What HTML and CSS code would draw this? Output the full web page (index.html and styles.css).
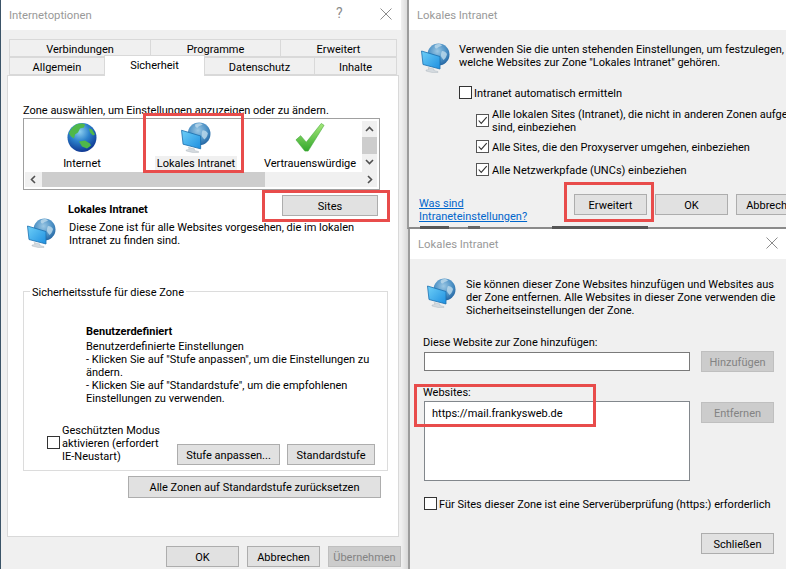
FILE: index.html
```html
<!DOCTYPE html>
<html lang="de">
<head>
<meta charset="utf-8">
<title>Internetoptionen</title>
<link rel="stylesheet" href="styles.css">
</head>
<body>
<svg class="defs" width="0" height="0" aria-hidden="true">
  <defs>
    <radialGradient id="gGlobe" cx="0.42" cy="0.3" r="0.75">
      <stop offset="0" stop-color="#8fd0f0"/>
      <stop offset="0.45" stop-color="#2c82cc"/>
      <stop offset="1" stop-color="#0c2f8c"/>
    </radialGradient>
    <radialGradient id="gBall" cx="0.45" cy="0.35" r="0.7">
      <stop offset="0" stop-color="#9cc8e4"/>
      <stop offset="0.6" stop-color="#4a8fc4"/>
      <stop offset="1" stop-color="#1f5f9c"/>
    </radialGradient>
    <linearGradient id="gScreen" x1="0" y1="0" x2="1" y2="1">
      <stop offset="0" stop-color="#6fd0f8"/>
      <stop offset="1" stop-color="#1e8fe0"/>
    </linearGradient>
    <linearGradient id="gCheck" x1="0" y1="0" x2="0" y2="1">
      <stop offset="0" stop-color="#a6e87a"/>
      <stop offset="1" stop-color="#33a82c"/>
    </linearGradient>
    <symbol id="i-intranet" viewBox="0 0 29 30">
      <circle cx="17.5" cy="11.5" r="11" fill="url(#gBall)"/>
      <path d="M14 2c3-1.500 6-1 7 .5-1.500 1.500-4 1-5 3-2 .5-3-2-2-3.500zM21 8c2 0 4 1 5 3-.5 3-2 5-3.500 6-1-2-3-3-2.500-5 0-2 .5-3 1-4z" fill="#b9d7ea" opacity=".85"/>
      <path d="M.5 8 19 13.500v12.500L2 21.500z" fill="url(#gScreen)" stroke="#1b6fae" stroke-width=".8"/>
      <path d="M7 24.500 13 26v1.500l4 1v1h-6l-6-1.500v-1l3-.500z" fill="#d4dadf" stroke="#a8b2ba" stroke-width=".4"/>
    </symbol>
    <symbol id="i-check" viewBox="0 0 32 32">
      <path d="M1 18.500 6 14 12 21 28 1l3 2-17 27.500h-3.500z" fill="url(#gCheck)" stroke="#3fa536" stroke-width=".6"/>
    </symbol>
    <symbol id="i-x" viewBox="0 0 12 12">
      <path d="M.5.500l11 11M11.500.500l-11 11" fill="none" stroke="#8c8c8c" stroke-width="1"/>
    </symbol>
    <symbol id="i-tick" viewBox="0 0 13 13">
      <path d="M2 6.500 5 10l6.500-7.500" fill="none" stroke="#333" stroke-width="1.300"/>
    </symbol>
    <symbol id="i-up" viewBox="0 0 9 6"><path d="M1 5l3.500-3.500L8 5" fill="none" stroke="#505050" stroke-width="1.600"/></symbol>
    <symbol id="i-down" viewBox="0 0 9 6"><path d="M1 1l3.500 3.500L8 1" fill="none" stroke="#505050" stroke-width="1.600"/></symbol>
    <symbol id="i-left" viewBox="0 0 6 9"><path d="M5 1 1.500 4.500 5 8" fill="none" stroke="#505050" stroke-width="1.600"/></symbol>
    <symbol id="i-right" viewBox="0 0 6 9"><path d="M1 1l3.500 3.500L1 8" fill="none" stroke="#505050" stroke-width="1.600"/></symbol>
  </defs>
</svg>

<main class="desktop">
  <section class="window win-options">
    <header class="titlebar">
      <span class="title">Internetoptionen</span>
      <span class="help">?</span>
      <svg class="close"><use href="#i-x"/></svg>
    </header>
    <div class="tabs">
      <div class="tab-row">
        <span class="tab t-verb">Verbindungen</span>
        <span class="tab t-prog">Programme</span>
        <span class="tab t-erw">Erweitert</span>
      </div>
      <div class="tab-row">
        <span class="tab t-allg">Allgemein</span>
        <span class="tab t-sich">Sicherheit</span>
        <span class="tab t-dat">Datenschutz</span>
        <span class="tab t-inh">Inhalte</span>
      </div>
    </div>
    <div class="panel">
      <p class="zone-prompt">Zone auswählen, um Einstellungen anzuzeigen oder zu ändern.</p>
      <div class="zone-list">
        <div class="zones">
          <div class="zone">
            <svg class="zone-icon" viewBox="0 0 30 30">
              <circle cx="15" cy="15" r="14.500" fill="url(#gGlobe)"/>
              <path d="M9 2c3-1 7-1.500 9 0l-1 3-4 1-2 4-3 2-1 4-3-2-2-3c1-4 4-7 7-9zM12 19l6-1 5 3 1 2-4 3-5-2zM22 6l3 1 3 5-2 1-3-3z" fill="#4fb84a"/>
            </svg>
            <span class="zone-name">Internet</span>
          </div>
          <div class="zone">
            <svg class="zone-icon"><use href="#i-intranet"/></svg>
            <span class="zone-name selected">Lokales Intranet</span>
          </div>
          <div class="zone">
            <svg class="zone-icon"><use href="#i-check"/></svg>
            <span class="zone-name">Vertrauenswürdige</span>
          </div>
        </div>
        <div class="vscroll">
          <svg class="arrow-v"><use href="#i-up"/></svg>
          <span class="vthumb"></span>
          <svg class="arrow-v"><use href="#i-down"/></svg>
        </div>
        <div class="hscroll">
          <svg class="arrow-h"><use href="#i-left"/></svg>
          <span class="hthumb"></span>
          <svg class="arrow-h arrow-end"><use href="#i-right"/></svg>
        </div>
      </div>
      <div class="zone-head">
        <strong class="zone-title">Lokales Intranet</strong>
        <button class="btn btn-sites">Sites</button>
      </div>
      <div class="zone-desc">
        <svg class="icon-large"><use href="#i-intranet"/></svg>
        <p class="zone-text">Diese Zone ist für alle Websites vorgesehen, die im lokalen<br>Intranet zu finden sind.</p>
      </div>
      <fieldset class="group">
        <legend class="group-legend">Sicherheitsstufe für diese Zone</legend>
        <strong class="level-title">Benutzerdefiniert</strong>
        <p class="level-text">Benutzerdefinierte Einstellungen<br>- Klicken Sie auf "Stufe anpassen", um die Einstellungen zu<br>ändern.<br>- Klicken Sie auf "Standardstufe", um die empfohlenen<br>Einstellungen zu verwenden.</p>
        <div class="level-actions">
          <span class="checkbox"></span>
          <span class="protected">Geschützten Modus<br>aktivieren (erfordert<br>IE-Neustart)</span>
          <button class="btn btn-custom">Stufe anpassen...</button>
          <button class="btn btn-default">Standardstufe</button>
        </div>
      </fieldset>
      <button class="btn btn-reset">Alle Zonen auf Standardstufe zurücksetzen</button>
    </div>
    <footer class="footer">
      <button class="btn btn-std">OK</button>
      <button class="btn btn-std">Abbrechen</button>
      <button class="btn btn-std btn-off">Übernehmen</button>
    </footer>
  </section>

  <section class="window win-intranet">
    <header class="titlebar">
      <span class="title">Lokales Intranet</span>
    </header>
    <div class="intranet-body">
      <div class="intro">
        <svg class="icon-large"><use href="#i-intranet"/></svg>
        <p class="intro-text">Verwenden Sie die unten stehenden Einstellungen, um festzulegen,<br>welche Websites zur Zone "Lokales Intranet" gehören.</p>
      </div>
      <div class="opt opt-auto"><span class="checkbox"></span><span class="opt-label">Intranet automatisch ermitteln</span></div>
      <div class="opt opt-sub opt-two"><span class="checkbox"><svg class="tick"><use href="#i-tick"/></svg></span><span class="opt-label">Alle lokalen Sites (Intranet), die nicht in anderen Zonen aufgeführt<br>sind, einbeziehen</span></div>
      <div class="opt opt-sub opt-proxy"><span class="checkbox"><svg class="tick"><use href="#i-tick"/></svg></span><span class="opt-label">Alle Sites, die den Proxyserver umgehen, einbeziehen</span></div>
      <div class="opt opt-sub opt-unc"><span class="checkbox"><svg class="tick"><use href="#i-tick"/></svg></span><span class="opt-label">Alle Netzwerkpfade (UNCs) einbeziehen</span></div>
      <div class="intranet-actions">
        <a class="link" href="#">Was sind<br>Intraneteinstellungen?</a>
        <button class="btn btn-std">Erweitert</button>
        <button class="btn btn-std">OK</button>
        <button class="btn btn-std">Abbrechen</button>
      </div>
    </div>
  </section>

  <div class="remnant"></div>

  <section class="window win-sites">
    <header class="titlebar">
      <span class="title">Lokales Intranet</span>
      <svg class="close"><use href="#i-x"/></svg>
    </header>
    <div class="sites-body">
      <div class="intro">
        <svg class="icon-large"><use href="#i-intranet"/></svg>
        <p class="sites-text">Sie können dieser Zone Websites hinzufügen und Websites aus<br>der Zone entfernen. Alle Websites in dieser Zone verwenden die<br>Sicherheitseinstellungen der Zone.</p>
      </div>
      <label class="field-label add-label">Diese Website zur Zone hinzufügen:</label>
      <div class="field-row">
        <span class="input"></span>
        <button class="btn btn-std btn-off">Hinzufügen</button>
      </div>
      <label class="field-label sites-label">Websites:</label>
      <div class="field-row list-row">
        <div class="listbox">https://mail.frankysweb.de</div>
        <button class="btn btn-std btn-off">Entfernen</button>
      </div>
      <div class="opt opt-https"><span class="checkbox"></span><span class="opt-label">Für Sites dieser Zone ist eine Serverüberprüfung (https:) erforderlich</span></div>
      <div class="sites-footer"><button class="btn btn-std">Schließen</button></div>
    </div>
  </section>

  <span class="mark mark-intranet"></span>
  <span class="mark mark-sites"></span>
  <span class="mark mark-advanced"></span>
  <span class="mark mark-websites"></span>
</main>
</body>
</html>
```

FILE: styles.css
```css
* { box-sizing: border-box; }
html, body { margin: 0; padding: 0; }
body {
  background: #fff;
  font-family: Roboto, "Noto Sans", sans-serif;
  font-size: 11px;
  line-height: 13px;
  color: #000;
}
p { margin: 0; }
strong { display: block; }
.defs { position: absolute; }
.desktop { position: relative; width: 786px; height: 569px; overflow: hidden; background: #f0f0f0; }

/* windows on the desktop */
.window { position: absolute; background: #f0f0f0; overflow: hidden; }
.win-options { left: 0; top: 0; width: 401px; height: 569px; border-left: 1px solid #3b5468; }
.desktop::before {
  content: "";
  position: absolute;
  left: 400px; top: 0;
  width: 8px; height: 569px;
  background: linear-gradient(90deg, #f4f4f4, #d8d8d8);
}
.win-intranet { left: 407px; top: 0; width: 379px; height: 229px; border-left: 2px solid #9c9c9c; border-bottom: 2px solid #8a8a8a; }
.win-sites { left: 408px; top: 229px; width: 378px; height: 340px; border-left: 2px solid #9c9c9c; }
.remnant {
  position: absolute; left: 420px; top: 226px; width: 240px; height: 3px;
  background: linear-gradient(90deg, #555 0 12%, transparent 12% 20%, #666 20% 25%, transparent 25% 55%, #555 55% 95%, transparent 95%);
}

.titlebar { position: relative; height: 30px; background: #fff; display: flex; align-items: center; padding-top: 1px; }
.title { color: #999; margin-left: 8px; font-size: 11.3px; }
.help { position: absolute; left: 335px; top: 7px; color: #8c8c8c; font-size: 14px; }
.close { position: absolute; width: 12px; height: 12px; }
.win-options .close { left: 379px; top: 8px; }
.win-sites .close { left: 356px; top: 8px; }

/* tabs */
.tabs { padding: 9px 0 0 8px; height: 45px; }
.tab-row { display: flex; height: 18px; }
.tab {
  display: flex; align-items: center; justify-content: center;
  height: 18px; padding-top: 2px;
  border: 1px solid #d9d9d9; border-right: 0;
  background: #f0f0f0;
  white-space: nowrap;
}
.t-verb { width: 141px; }
.t-prog { width: 130px; }
.t-erw { width: 117px; border-right: 1px solid #d9d9d9; }
.t-allg { width: 95px; }
.t-sich {
  position: relative; z-index: 1;
  width: 101px; height: 21px; margin-top: -2px;
  background: #fff; border-bottom: 0;
  border-right: 1px solid #d9d9d9;
  padding: 0 0 1px;
}
.t-dat { width: 109px; border-left: 0; }
.t-inh { width: 83px; border-right: 1px solid #d9d9d9; }

/* security panel */
.panel {
  width: 392px; height: 462px; margin-left: 6px;
  background: #fff; border: 1px solid #d9d9d9;
  padding: 28px 0 0 15px;
}
.zone-prompt { height: 14px; white-space: nowrap; }
.zone-list {
  width: 357px; height: 72px;
  border: 1px solid #a0a0a0;
  padding: 2px 2px 2px 1px;
  display: grid;
  grid-template-columns: 337px 15px;
  grid-template-rows: 51px 15px;
}
.zones { display: flex; overflow: hidden; }
.zone { flex: 0 0 114px; display: flex; flex-direction: column; align-items: center; }
.zone-icon { width: 30px; height: 31px; margin-top: 1px; flex: none; display: block; }
.zone-name { margin-top: 3px; padding: 1px 2px 0; white-space: nowrap; height: 15px; line-height: 14px; flex: none; }
.zone-name.selected { background: #f0f0f0; }
.vscroll { background: #f0f0f0; display: flex; flex-direction: column; align-items: center; }
.arrow-v { width: 9px; height: 6px; margin: 5px 0; flex: none; }
.vthumb { width: 15px; height: 17px; background: #cdcdcd; flex: none; }
.hscroll { grid-column: 1 / 3; background: #f0f0f0; display: flex; align-items: center; }
.arrow-h { width: 6px; height: 9px; margin: 0 5px; flex: none; }
.hthumb { width: 223px; height: 15px; background: #cdcdcd; flex: none; margin-left: 1px; }
.arrow-end { margin-left: auto; margin-right: 4px; }

.zone-head { display: flex; justify-content: space-between; padding: 5px 20px 0 45px; height: 26px; }
.zone-title { margin-top: 8px; }
.zone-desc { display: flex; gap: 13px; padding-left: 4px; }
.icon-large { width: 29px; height: 30px; flex: none; margin-top: 2px; display: block; }
.zone-text { margin-top: 5px; white-space: nowrap; }

.group {
  position: relative;
  width: 365px; height: 180px; margin: 43px 0 0; padding: 33px 0 4px 62px;
  border: 1px solid #dcdcdc;
  min-inline-size: 0;
}
.group-legend { position: absolute; left: 6px; top: -6px; padding: 0 2px; line-height: 13px; background: #fff; }
.level-text { margin-top: 2px; white-space: nowrap; }
.level-actions { display: flex; align-items: flex-end; margin: 19px 0 0 -39px; height: 41px; }
.checkbox {
  display: block; flex: none; width: 13px; height: 13px;
  border: 1px solid #333; background: #fff;
  position: relative;
}
.level-actions .checkbox { margin-bottom: 16px; }
.protected { width: 110px; margin-left: 2px; margin-bottom: 2px; white-space: nowrap; }
.btn {
  display: flex; align-items: center; justify-content: center;
  height: 21px; padding: 1px 0 0;
  background: #e1e1e1; border: 1px solid #adadad;
  font: inherit; color: #000;
  flex: none;
}
.btn-sites { width: 96px; }
.btn-custom { width: 103px; margin-left: 5px; }
.btn-default { width: 88px; margin-left: 7px; }
.btn-reset { width: 253px; height: 22px; margin: 5px 0 0 105px; }
.btn-std { width: 73px; }
.btn-off { background: #ccc; border-color: #bfbfbf; color: #838383; }

.footer { display: flex; gap: 8px; padding: 9px 0 0 165px; }

/* intranet options dialog */
.intranet-body { padding-left: 12px; }
.intro { display: flex; }
.intranet-body .intro { padding-top: 11px; height: 54px; }
.intro-text { margin: 2px 0 0 9px; white-space: nowrap; }
.opt { display: flex; align-items: center; white-space: nowrap; }
.opt-label { margin-top: 2px; }
.opt-auto { margin: 1px 0 0 38px; height: 14px; gap: 2px; }
.opt-sub { margin-left: 55px; gap: 3px; }
.opt-two { height: 26px; margin-top: 8px; }
.opt-proxy { height: 14px; margin-top: 6px; }
.opt-unc { height: 14px; margin-top: 9px; }
.tick { position: absolute; left: 0; top: 0; width: 11px; height: 11px; }
.opt-sub .checkbox { border-color: #555; }
.intranet-actions { display: flex; gap: 8px; margin: 18px 0 0 -2px; align-items: flex-start; }
.link { flex: none; width: 147px; margin-top: 3px; color: #0066cc; white-space: nowrap; text-decoration: underline; }

/* sites dialog */
.sites-body { padding: 0 0 0 14px; }
.sites-body .intro { padding: 19px 0 0 3px; height: 76px; }
.sites-text { margin-left: 10px; white-space: nowrap; }
.sites-body .icon-large { margin-top: 0; }
.field-label { display: block; height: 14px; padding-top: 1px; }
.add-label { margin-left: -1px; }
.sites-label { margin-left: -1px; margin-top: 12px; height: 15px; padding-top: 2px; }
.field-row { display: flex; align-items: flex-start; gap: 11px; }
.input { display: block; width: 266px; height: 19px; margin-top: 3px; background: #fff; border: 1px solid #7a7a7a; }
.field-row .btn { margin-top: 2px; }
.listbox {
  width: 266px; height: 80px; margin-top: 2px;
  background: #fff; border: 1px solid #82878c;
  padding: 5px 7px;
}
.list-row .btn { margin-top: 3px; }
.opt-https { margin-top: 16px; gap: 2px; height: 13px; }
.sites-footer { display: flex; padding: 23px 0 0 277px; }

/* red annotations drawn over the screenshot */
.mark { position: absolute; border: 3px solid #e84c4b; pointer-events: none; }
.mark-intranet { left: 143px; top: 113px; width: 101px; height: 60px; }
.mark-sites { left: 262px; top: 190px; width: 128px; height: 32px; }
.mark-advanced { left: 564px; top: 182px; width: 90px; height: 40px; }
.mark-websites { left: 414px; top: 384px; width: 182px; height: 43px; }
```
